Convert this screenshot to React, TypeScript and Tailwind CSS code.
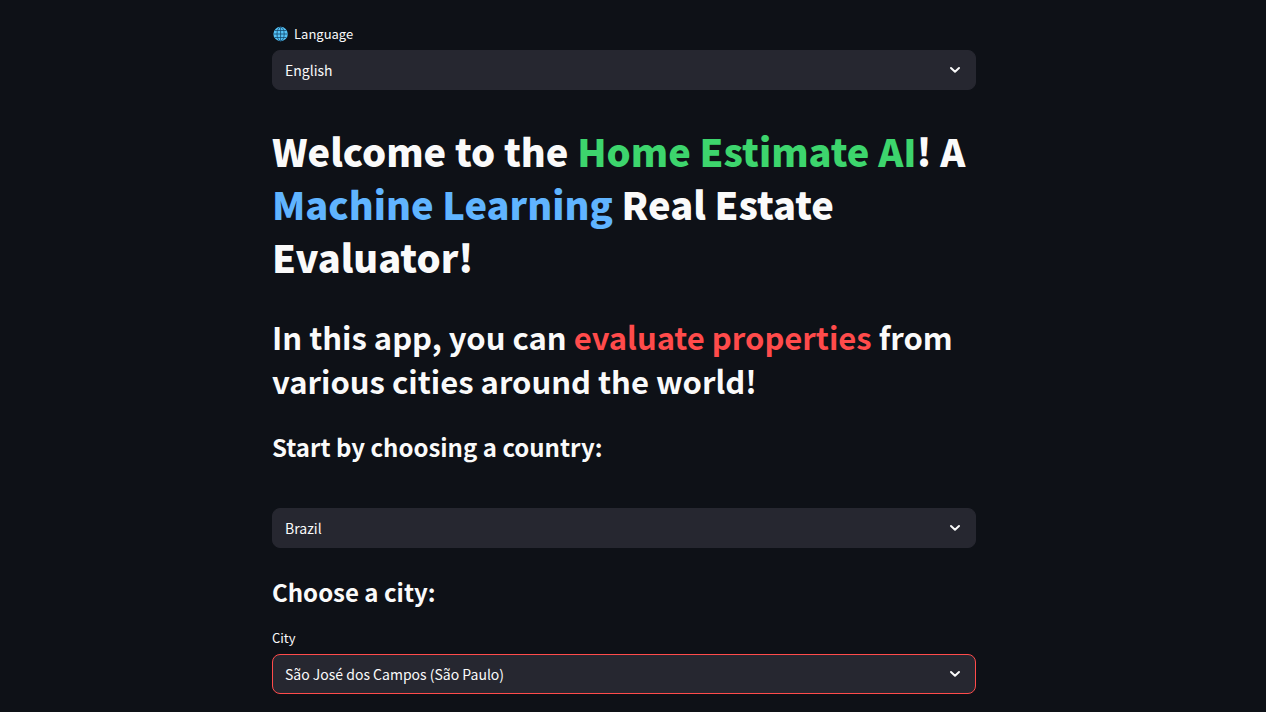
import { useState, type ReactNode } from "react";

function GlobeIcon() {
  return (
    <svg aria-hidden="true" viewBox="0 0 16 16" className="size-4 shrink-0">
      <circle cx="8.6" cy="8" r="7.2" fill="#55c3f7" />
      <g fill="none" stroke="#144a6e" strokeWidth="0.8">
        <ellipse cx="8.6" cy="8" rx="3.6" ry="7" />
        <path d="M8.6 1v14M1.6 8h14M2.8 4.5h11.6M2.8 11.5h11.6" />
      </g>
    </svg>
  );
}

function ChevronIcon() {
  return (
    <svg
      aria-hidden="true"
      viewBox="0 0 12 12"
      className="pointer-events-none col-start-1 row-start-1 mr-[15px] size-3 self-center justify-self-end"
      fill="none"
      stroke="#fafafa"
      strokeWidth="2"
      strokeLinecap="round"
      strokeLinejoin="round"
    >
      <path d="M2 4l4 3.7L10 4" />
    </svg>
  );
}

type SelectFieldProps = {
  id: string;
  label: string;
  icon?: ReactNode;
  hideLabel?: boolean;
  focused?: boolean;
  options: string[];
};

function SelectField({ id, label, icon, hideLabel, focused, options }: SelectFieldProps) {
  const [value, setValue] = useState(options[0]);
  return (
    <div className="flex flex-col">
      {!hideLabel && (
        <label htmlFor={id} className="mb-1 flex h-6 items-center gap-1.5 text-[13px]">
          {icon}
          {label}
        </label>
      )}
      <div className="grid">
        <select
          id={id}
          aria-label={hideLabel ? label : undefined}
          value={value}
          onChange={(e) => setValue(e.target.value)}
          className={`col-start-1 row-start-1 h-10 w-full appearance-none rounded-lg border bg-[#262730] px-3 text-sm outline-none focus:border-[#ff4b4b] ${
            focused ? "border-[#ff4b4b]" : "border-[#262730]"
          }`}
        >
          {options.map((option) => (
            <option key={option}>{option}</option>
          ))}
        </select>
        <ChevronIcon />
      </div>
    </div>
  );
}

export default function App() {
  return (
    <div className="min-h-screen bg-[#0e1117] pr-[18px] font-['Noto_Sans_CJK_SC','Noto_Sans',sans-serif] text-[#fafafa]">
      <main className="mx-auto max-w-[704px] pt-[22px] pb-[18px]">
        <SelectField
          id="language"
          label="Language"
          icon={<GlobeIcon />}
          options={["English", "Português"]}
        />
        <h1 className="mt-[34px] text-[38px] leading-[53px] font-extrabold">
          Welcome to the <span className="text-[#3dd56d]">Home Estimate AI</span>! A{" "}
          <span className="text-[#60b4ff]">Machine Learning</span> Real Estate Evaluator!
        </h1>
        <h2 className="mt-8 text-[31px] leading-[44px] font-semibold">
          In this app, you can <span className="text-[#ff4b4b]">evaluate properties</span> from
          various cities around the world!
        </h2>
        <h3 className="mt-[26px] text-2xl leading-9 font-semibold">Start by choosing a country:</h3>
        <div className="mt-[43px]">
          <SelectField id="country" label="Country" hideLabel options={["Brazil"]} />
        </div>
        <h3 className="mt-[26px] mb-4 text-2xl leading-9 font-semibold">Choose a city:</h3>
        <SelectField id="city" label="City" focused options={["São José dos Campos (São Paulo)"]} />
      </main>
    </div>
  );
}
